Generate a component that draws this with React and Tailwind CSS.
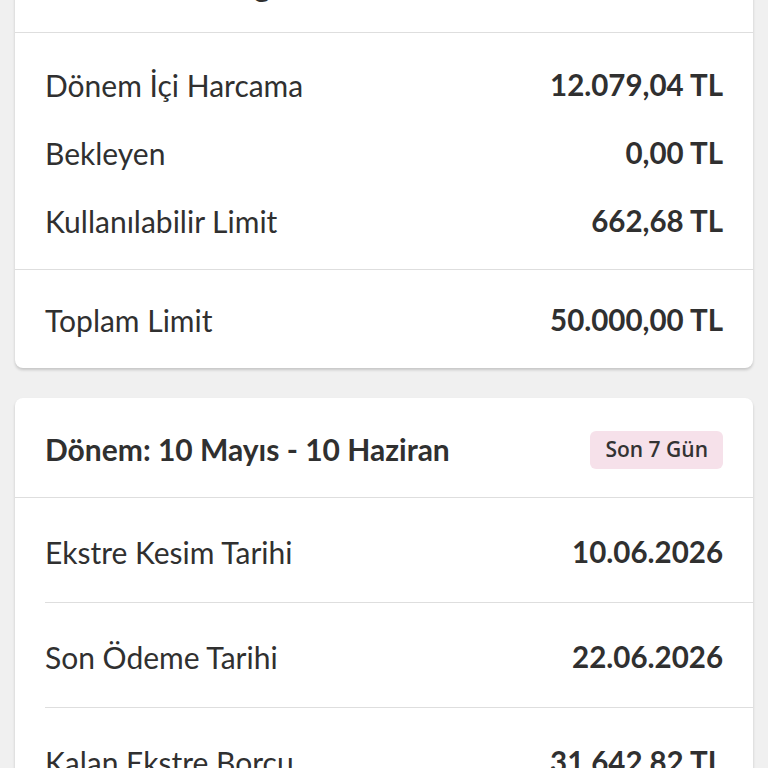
import React from 'react';

const limitRows = [
    { label: 'Dönem İçi Harcama', value: '12.079,04 TL' },
    { label: 'Bekleyen', value: '0,00 TL' },
    { label: 'Kullanılabilir Limit', value: '662,68 TL' },
];

const periodRows = [
    { label: 'Ekstre Kesim Tarihi', value: '10.06.2026' },
    { label: 'Son Ödeme Tarihi', value: '22.06.2026' },
    { label: 'Kalan Ekstre Borcu', value: '31.642,82 TL' },
];

const Row = ({ label, value, className = '' }) => (
    <div className={`flex items-center justify-between ${className}`}>
        <span className="font-normal text-[30px]">{label}</span>
        <span className="font-bold text-[29.5px]">{value}</span>
    </div>
);

const App = () => {
    return (
        <div
            className="min-h-screen bg-[#f0f0f0] px-[15px] text-[#303030] overflow-hidden"
            style={{ fontFamily: 'Lato, "Noto Sans", sans-serif' }}
        >
            {/* Limit card, header scrolled out of view */}
            <div className="-mt-[66px] bg-white rounded-lg shadow-[0_2px_3px_rgba(0,0,0,0.18)]">
                <div className="h-[99px] flex items-center pt-[4px] px-[30px] border-b border-[#dedede] text-[30px] font-bold">
                    Güncel Limit Bilgisi
                </div>
                <div className="pt-[18px] pb-[14px] px-[30px] border-b border-[#dedede]">
                    {limitRows.map((row) => (
                        <Row key={row.label} {...row} className="h-[68px]" />
                    ))}
                </div>
                <Row label="Toplam Limit" value="50.000,00 TL" className="h-[98px] pt-[2px] px-[30px]" />
            </div>

            {/* Period card */}
            <div className="mt-[30px] bg-white rounded-lg shadow-[0_2px_3px_rgba(0,0,0,0.18)]">
                <div className="h-[100px] flex items-center justify-between pt-[4px] px-[30px] border-b border-[#dedede]">
                    <span className="text-[30px] font-bold">Dönem: 10 Mayıs - 10 Haziran</span>
                    <span
                        className="h-[38px] px-[15px] flex items-center rounded-md bg-[#f6e1ea] text-[21px] font-semibold text-[#333333]"
                        style={{ fontFamily: '"Open Sans", sans-serif' }}
                    >
                        Son 7 Gün
                    </span>
                </div>
                <div className="pl-[30px]">
                    {periodRows.map((row) => (
                        <Row
                            key={row.label}
                            {...row}
                            className="h-[105px] pt-[5px] pr-[30px] border-b border-[#dedede]"
                        />
                    ))}
                </div>
            </div>
        </div>
    );
};

export default App;
